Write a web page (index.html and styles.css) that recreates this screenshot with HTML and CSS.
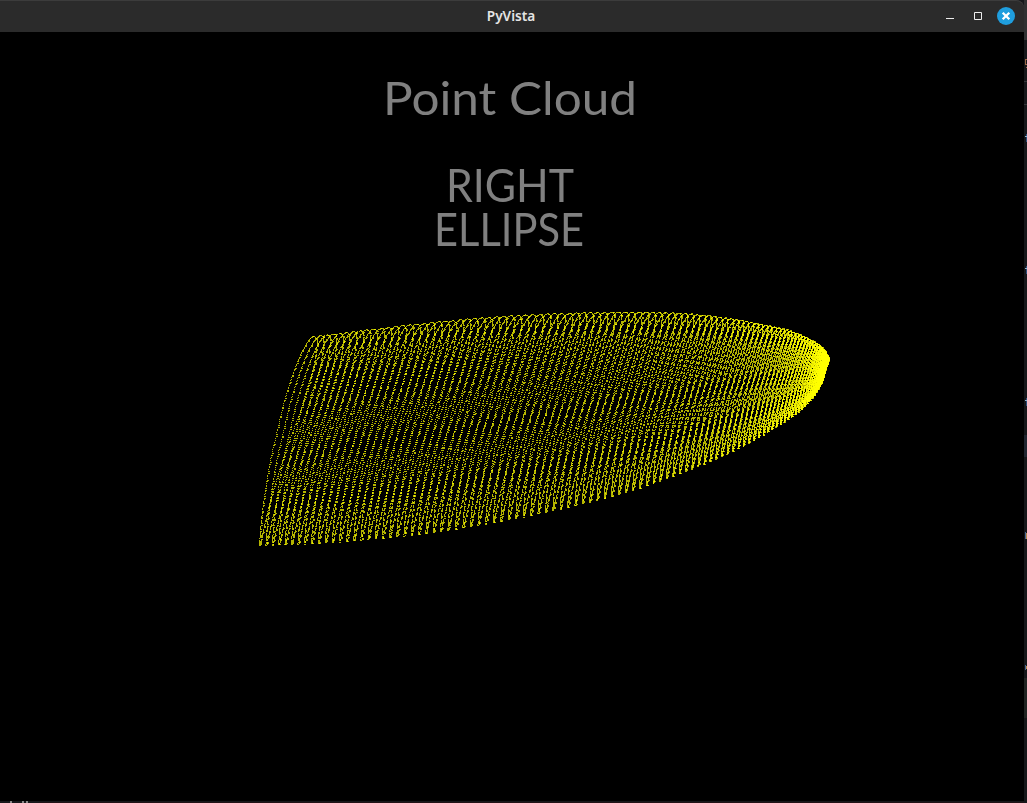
FILE: index.html
```
<!DOCTYPE html>
<html lang="en">
<head>
<meta charset="utf-8">
<title>PyVista</title>
<link rel="stylesheet" href="styles.css">
</head>
<body>
<div class="desktop">
  <main class="window">
    <header class="titlebar">
      <span class="name">PyVista</span>
      <svg class="controls" width="84" height="32" viewBox="0 0 84 32">
        <path d="M6 18.500h8" stroke="#eee" fill="none"/>
        <path d="M34.500 12.500h7v7h-7z" stroke="#eee" fill="none"/>
        <circle cx="66" cy="16" r="9" fill="#1f9ede"/>
        <path d="M62.700 12.700l6.600 6.600M69.300 12.700l-6.600 6.600" stroke="#fff" stroke-width="2.300"/>
      </svg>
    </header>
    <section class="viewport">
      <canvas class="cloud" width="1024" height="769"></canvas>
      <svg class="labels" width="1024" height="240" viewBox="0 32 1024 240">
        <text x="383" y="114.500" textLength="254" lengthAdjust="spacingAndGlyphs">Point Cloud</text>
        <text x="446" y="202" textLength="128" lengthAdjust="spacingAndGlyphs">RIGHT</text>
        <text x="434" y="246" textLength="150" lengthAdjust="spacingAndGlyphs">ELLIPSE</text>
      </svg>
    </section>
  </main>
  <svg class="behind" width="3" height="803" viewBox="0 0 3 803">
    <path fill="#303132" d="M0 0h3v40H0z"/>
    <path fill="#333638" d="M0 81h3v1H0zM0 104h3v1H0z"/>
    <path fill="#202630" d="M0 435h3v22H0z"/>
    <path fill="#202422" d="M0 678h3v40H0z"/>
    <path fill="#9a6746" d="M1 59h2v1H1zM1 60h1v4H1zM1 64h2v1H1zM2 67h1v1H2z"/>
    <path fill="#8eb4d0" d="M1 136h2v1H1zM1 268h2v1H1zM1 400h2v1H1z"/>
    <path fill="#294f7c" d="M2 134h1v2H2zM2 137h1v5H2zM2 266h1v2H2zM2 269h1v5H2zM2 398h1v2H2zM2 401h1v5H2z"/>
    <path fill="#47678f" d="M1 532h1v7H1zM1 665h1v5H1z"/>
    <path fill="#b4874d" d="M2 533h1v6H2zM2 666h1v3H2z"/>
  </svg>
  <svg class="below" width="1024" height="2" viewBox="0 0 1024 2">
    <path fill="#17181b" d="M0 0h39v2H0z"/>
    <path fill="#201316" d="M39 1h985v1H39z"/>
    <path fill="#888" d="M10 0h2v2h-2zM22 0h2v2h-2zM26 0h2v2h-2z"/>
  </svg>
</div>
<script src="cloud.js"></script>
</body>
</html>
```
FILE: styles.css
```
body { margin: 0; background: #000; }
.desktop {
  display: grid;
  grid-template: 801px 2px / 1024px 3px;
  width: 1027px;
  height: 803px;
  overflow: hidden;
  background: #15171a;
}
.window { display: flex; flex-direction: column; min-height: 0; }
.titlebar {
  display: grid;
  grid-template-columns: 84px 1fr 84px;
  align-items: center;
  height: 32px;
  box-sizing: border-box;
  background: #2b2b2b;
  box-shadow: inset 0 1px #3c3c3c;
  border-radius: 0 8px 0 0;
}
.name {
  grid-column: 2;
  padding-right: 2px;
  text-align: center;
  color: #e4e4e4;
  font: 600 13.600px/32px "Noto Sans", sans-serif;
}
.controls { display: block; }
.viewport { display: grid; height: 769px; background: #000; }
.cloud, .labels { grid-area: 1 / 1; display: block; }
.labels text { fill: #808080; font: 400 46px Lato, sans-serif; }
.behind { grid-column: 2; grid-row: 1 / 3; display: block; }
.below { grid-column: 1; grid-row: 2; display: block; }
```
FILE: cloud.js
```
const ctx = document.querySelector('.cloud').getContext('2d');

// Catmull-Rom interpolation through rows of [key, ...values].
function sample(rows, key) {
  let k = 0;
  while (k < rows.length - 2 && rows[k + 1][0] <= key) k++;
  const p0 = rows[Math.max(0, k - 1)], p1 = rows[k], p2 = rows[k + 1];
  const p3 = rows[Math.min(rows.length - 1, k + 2)];
  const h = p2[0] - p1[0], u = (key - p1[0]) / h;
  return p1.slice(1).map((a, j) => {
    const b = p2[j + 1];
    const m1 = (b - p0[j + 1]) / (p2[0] - p0[0]) * h;
    const m2 = (p3[j + 1] - a) / (p3[0] - p1[0]) * h;
    return (2*u*u*u - 3*u*u + 1) * a + (u*u*u - 2*u*u + u) * m1
      + (3*u*u - 2*u*u*u) * b + (u*u*u - u*u) * m2;
  });
}

// Rim of the shell: section index, bottom x, bottom y, scale.
const rim = [
  [0, 259, 545, 1], [7, 304, 543.5, 1.02], [13, 346, 541, 1.033],
  [25, 432.5, 532, 1.03], [38, 530, 515, 0.97], [51, 625, 492, 0.86],
  [60, 685, 471, 0.735], [68, 732, 451, 0.605], [75, 767, 432, 0.48],
  [84, 801, 409, 0.31], [92, 819, 386, 0.145], [100, 826, 363, 0.01]
];

// Cross-section relative to its lower end.
const section = [
  [0, 0], [2, -25], [6, -55], [11, -85], [18, -115], [26, -148],
  [38, -183], [46, -200], [51, -207], [55, -209], [57.5, -206],
  [57, -194], [54, -177], [45, -145], [32, -110], [20, -75],
  [10, -40], [3, -10], [1, 0]
];
let distance = 0;
const outline = section.map((p, i) => {
  if (i) distance += Math.hypot(p[0] - section[i-1][0], p[1] - section[i-1][1]);
  return [distance, ...p];
});

ctx.fillStyle = 'rgba(255,255,0,0.71)';
const steps = 290;
for (let i = 0; i <= 100; i++) {
  const [bx, by, scale] = sample(rim, i);
  for (let j = 0; j <= steps; j++) {
    // Points crowd together at the lower end and around the crest.
    const t = j / steps - 0.022 * Math.sin(4 * Math.PI * j / steps);
    const [x, y] = sample(outline, distance * t);
    ctx.fillRect(Math.round(bx + x * scale), Math.round(by + y * scale) - 32,
      (i + j) % 5 < 3 ? 1 : 2, 1);
  }
}
```
